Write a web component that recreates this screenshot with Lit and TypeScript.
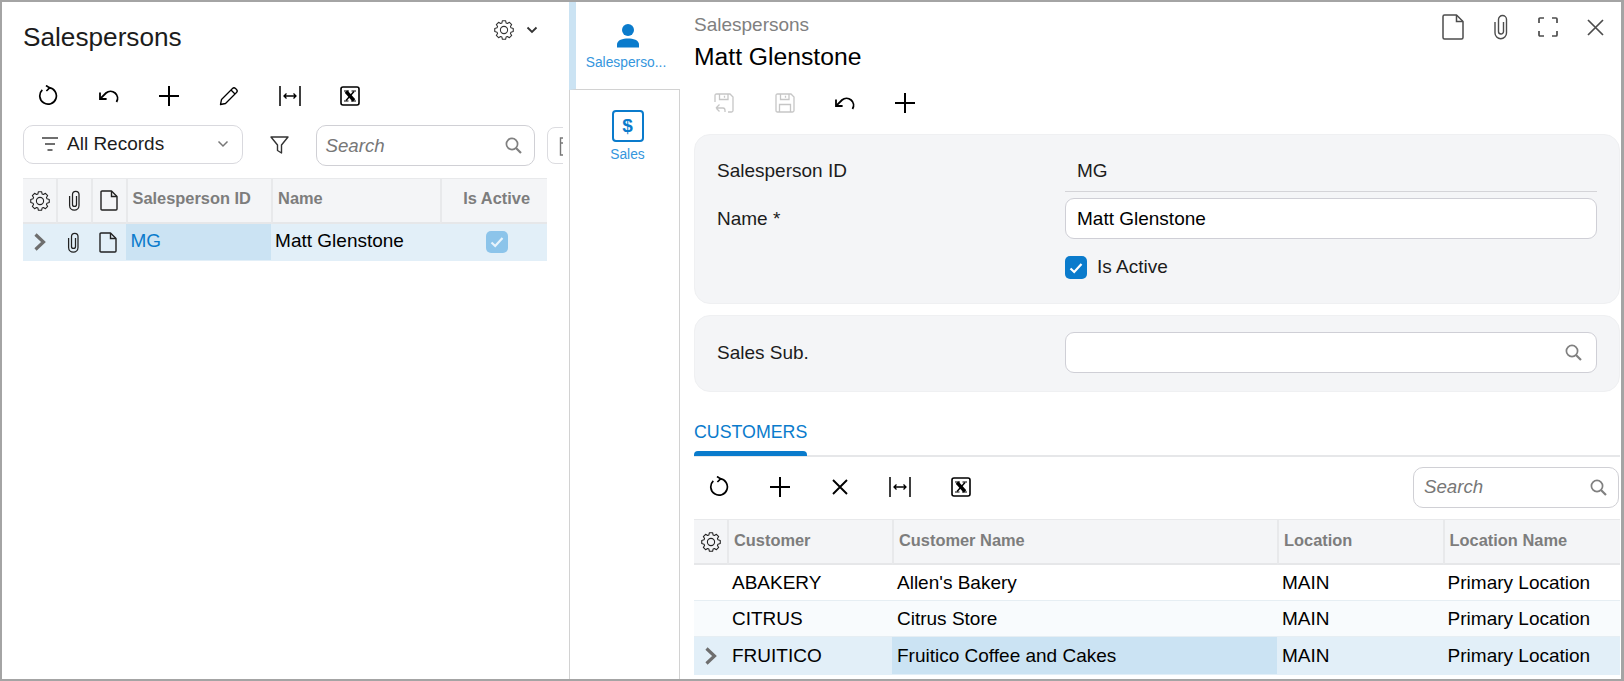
import { LitElement, html, css, svg } from "lit";
import { customElement } from "lit/decorators.js";

const gearPath = () => {
  // eight teeth round a centre of 10,10
  const pts: string[] = [];
  for (let i = 0; i < 8; i++) {
    const a = (i * Math.PI) / 4;
    for (const [r, d] of [[7.3, -0.3], [9.4, -0.17], [9.4, 0.17], [7.3, 0.3]]) {
      const x = 10 + r * Math.sin(a + d);
      const y = 10 - r * Math.cos(a + d);
      pts.push(`${x.toFixed(2)} ${y.toFixed(2)}`);
    }
  }
  return "M" + pts.join("L") + "Z";
};

const icons: Record<string, { w: number; h: number; body: unknown }> = {
  gear: { w: 20, h: 20, body: svg`<path d=${gearPath()} stroke-width="1.1" stroke-linejoin="round"/><circle cx="10" cy="10" r="3.6" stroke-width="1.1"/>` },
  chevDown: { w: 12, h: 8, body: svg`<path d="M1.5 1.5L6 6l4.5-4.5" stroke-width="1.8"/>` },
  chevSoft: { w: 12, h: 8, body: svg`<path d="M1.5 1.5L6 6l4.5-4.5" stroke-width="1.5"/>` },
  chevRight: { w: 13, h: 18, body: svg`<path d="M2.5 1.5L10.5 9l-8 7.5" stroke-width="3.2"/>` },
  refresh: { w: 20, h: 22, body: svg`<path d="M11 2.6A8.3 8.3 0 1 1 4.3 4.9" stroke-width="1.7"/><path d="M8 0.5L11.6 2.9 8.4 6" stroke-width="1.7"/>` },
  undo: { w: 22, h: 20, body: svg`<path d="M2.6 12.4L8 7A7 7 0 0 1 18.5 16" stroke-width="1.8"/><path d="M2 6.5V13H8.6" stroke-width="1.8"/>` },
  plus: { w: 20, h: 20, body: svg`<path d="M10 0V20M0 10H20" stroke-width="2"/>` },
  close: { w: 16, h: 16, body: svg`<path d="M1 1L15 15M15 1L1 15" stroke-width="1.9"/>` },
  pencil: { w: 20, h: 20, body: svg`<path d="M1.5 18.5L2.5 13.5 13.5 2.5Q15 1 16.5 2.5L17.5 3.5Q19 5 17.5 6.5L6.5 17.5Z" stroke-width="1.3" stroke-linejoin="round"/><path d="M12 4L16 8" stroke-width="1.3"/>` },
  fit: { w: 22, h: 20, body: svg`<path d="M1 0V20M21 0V20" stroke-width="1.5"/><path d="M5 10H17M7.5 7.5L5 10l2.5 2.5M14.5 7.5L17 10l-2.5 2.5" stroke-width="1.3"/>` },
  excel: { w: 20, h: 20, body: svg`<rect x="1" y="1" width="18" height="18" rx="2" stroke-width="1.6"/><path d="M6 5.5L14 14.5" stroke-width="3.4"/><path d="M14 5.5L6 14.5" stroke-width="1.4"/><path d="M4 5H9M11.5 5H16M4 15H8.5M11 15H16" stroke-width="1.2"/>` },
  lines: { w: 16, h: 14, body: svg`<path d="M0 1H16M3 7H13M5.5 13H10.5" stroke-width="2"/>` },
  funnel: { w: 19, h: 18, body: svg`<path d="M1 1H18L11.5 9V17L7.5 14.5V9Z" stroke-width="1.4" stroke-linejoin="round"/>` },
  search: { w: 17, h: 17, body: svg`<circle cx="7" cy="7" r="5.6" stroke-width="1.7"/><path d="M11 11L16 16" stroke-width="2.2"/>` },
  doc: { w: 18, h: 21, body: svg`<path d="M1 2Q1 1 2 1H11.5L17 6.5V19Q17 20 16 20H2Q1 20 1 19Z" stroke-width="1.4" stroke-linejoin="round"/><path d="M11.5 1V6.5H17" stroke-width="1.4"/>` },
  docLg: { w: 22, h: 26, body: svg`<path d="M1 2.5Q1 1 2.5 1H14.5L21 7.5V23.5Q21 25 19.5 25H2.5Q1 25 1 23.5Z" stroke-width="1.5" stroke-linejoin="round"/><path d="M14.5 1V7.5H21" stroke-width="1.5"/>` },
  clip: { w: 13, h: 21, body: svg`<path d="M8.5 6V14.4A2 2 0 0 1 4.5 14.4V4.5A3.2 3.2 0 0 1 11 4.5V15.5A4.7 4.7 0 0 1 1.6 15.5V6" stroke-width="1.25"/>` },
  clipLg: { w: 16, h: 26, body: svg`<path d="M10.5 8V17.5A2.5 2.5 0 0 1 5.5 17.5V5.5A4 4 0 0 1 13.5 5.5V19A5.75 5.75 0 0 1 2 19V8" stroke-width="1.4"/>` },
  expand: { w: 20, h: 20, body: svg`<path d="M1 6V2Q1 1 2 1H6M14 1H18Q19 1 19 2V6M19 14V18Q19 19 18 19H14M6 19H2Q1 19 1 18V14" stroke-width="1.7"/>` },
  closeLg: { w: 17, h: 17, body: svg`<path d="M1 1L16 16M16 1L1 16" stroke-width="1.7"/>` },
  check: { w: 14, h: 12, body: svg`<path d="M1.5 6.5L5.2 10 12.5 2" stroke-width="2.2"/>` },
  person: { w: 24, h: 24, body: svg`<circle cx="12" cy="6" r="6" fill="currentColor" stroke="none"/><path d="M1 23.5V20.5C1 16 7 14.5 12 14.5S23 16 23 20.5V23.5Z" fill="currentColor" stroke="none"/>` },
  save: { w: 20, h: 20, body: svg`<path d="M1 2.5Q1 1 2.5 1H16L19 4V17.5Q19 19 17.5 19H2.5Q1 19 1 17.5Z" stroke-width="1.3"/><path d="M5.5 1V6.5H14V1M10.5 2.8V4.8M4.5 19V11.5H15.5V19" stroke-width="1.3"/>` },
  saveBack: { w: 20, h: 20, body: svg`<path d="M1 9V2.5Q1 1 2.5 1H16L19 4V17.5Q19 19 17.5 19H14" stroke-width="1.3"/><path d="M5.5 1V6.5H14V1M10.5 2.8V4.8" stroke-width="1.3"/><path d="M2 15L5.5 11.5M2 15L5.5 18.5M2 15H9Q11 15 11 17.5V19" stroke-width="1.3"/>` },
  bracket: { w: 8, h: 19, body: svg`<path d="M6 1H1.5V18H6M1.5 6H5" stroke-width="1.4"/>` },
};

const icon = (name: string, cls = "") => {
  const i = icons[name];
  return html`<svg class="ic ${cls}" width=${i.w} height=${i.h} viewBox="0 0 ${i.w} ${i.h}" fill="none" stroke="currentColor">${i.body}</svg>`;
};

const customers = [
  { id: "ABAKERY", name: "Allen's Bakery", cls: "" },
  { id: "CITRUS", name: "Citrus Store", cls: "tint" },
  { id: "FRUITICO", name: "Fruitico Coffee and Cakes", cls: "current" },
];

@customElement("app-root")
export class AppRoot extends LitElement {
  static styles = css`
    :host {
      display: block;
      width: 1624px;
      height: 681px;
      font-family: "Liberation Sans", Arial, sans-serif;
      color: #000;
    }
    * {
      box-sizing: border-box;
    }
    .page {
      display: flex;
      width: 1624px;
      height: 681px;
      border: solid #a4a4a4;
      border-width: 2px 3px 2px 2px;
      background: #fff;
      overflow: hidden;
    }
    .ic {
      display: block;
      flex: none;
    }

    /* left list */
    .list {
      width: 567px;
      flex: none;
      padding-left: 21px;
    }
    .list-head {
      display: flex;
      justify-content: space-between;
      height: 74px;
      padding-right: 31px;
    }
    .list-title {
      font-size: 26.2px;
      line-height: 30px;
      margin-top: 20px;
      color: #1c1c1c;
    }
    .list-tools {
      display: flex;
      align-items: center;
      gap: 12px;
      height: 20px;
      margin-top: 18px;
      color: #333;
    }
    .toolbar {
      display: flex;
      align-items: center;
      height: 40px;
      margin-left: -5px;
    }
    .tb {
      width: 60.4px;
      height: 40px;
      display: flex;
      align-items: center;
      justify-content: center;
      flex: none;
    }
    .filters {
      display: flex;
      align-items: flex-start;
      margin-top: 9px;
      width: 540px;
      overflow: hidden;
    }
    .combo {
      width: 219.5px;
      height: 39px;
      flex: none;
      display: flex;
      align-items: center;
      padding: 0 13px 2px 18px;
      border: 1px solid #d9d9de;
      border-radius: 10px;
      font-size: 19px;
      color: #1c1c1c;
    }
    .combo .lines {
      color: #6f6f6f;
      margin-right: 9px;
    }
    .combo .chev {
      margin-left: auto;
      color: #777;
    }
    .funnel {
      width: 73px;
      height: 39px;
      flex: none;
      display: flex;
      align-items: center;
      justify-content: center;
      color: #333;
    }
    .search {
      display: flex;
      align-items: center;
      justify-content: space-between;
      height: 41px;
      border: 1px solid #d0d0d5;
      border-radius: 10px;
      padding: 0 12px 0 9px;
      font-size: 18.7px;
      font-style: italic;
      color: #777;
    }
    .search .ic {
      color: #808080;
    }
    .filters .search {
      width: 219.5px;
      flex: none;
    }
    .stub {
      width: 40px;
      height: 37px;
      flex: none;
      margin: 2px 0 0 11.5px;
      border: 1px solid #dcdce0;
      border-radius: 8px;
      padding: 9px 0 0 11px;
      color: #777;
    }

    /* tables */
    .table {
      display: grid;
      font-size: 19px;
    }
    .list-table {
      width: 524px;
      margin-top: 12px;
      grid-template-columns: 33px 34.5px 35px 145.6px 169px 1fr;
      grid-template-rows: 46px 37px;
    }
    .cust-table {
      margin-top: 2px;
      grid-template-columns: 33px 165px 385px 165.6px 1fr;
      grid-template-rows: 46px 36px 36px 38px;
    }
    .hd {
      display: flex;
      align-items: center;
      min-width: 0;
      padding: 0 0 3px 5px;
      background: #f4f5f7;
      border-top: 1px solid #e8e9eb;
      border-bottom: 2px solid #e6e7e9;
      border-left: 2px solid #e8e9eb;
      font-size: 16.4px;
      font-weight: bold;
      color: #7d7d7d;
      white-space: nowrap;
    }
    .list-table .hd {
      padding-bottom: 5px;
    }
    .hd:first-child {
      border-left: 0;
    }
    .list-table .hd.mark,
    .hd.mark {
      justify-content: center;
      padding: 0;
      color: #222;
    }
    .list-table .hd.end,
    .hd.end {
      justify-content: flex-end;
      padding: 0 17px 5px 0;
    }
    .cell {
      display: flex;
      align-items: center;
      min-width: 0;
      padding-left: 5px;
      white-space: nowrap;
      border-bottom: 1px solid #e6eef3;
    }
    .list-table .cell {
      padding-bottom: 2px;
    }
    .list-table .cell.name-cell {
      padding-left: 4px;
    }
    .list-table .cell.mark,
    .cell.mark {
      justify-content: center;
      padding: 0;
      color: #222;
    }
    .cell.mark.chevron {
      color: #6e6e6e;
    }
    .list-table .cell.center {
      justify-content: center;
      padding: 0 0 0 6px;
    }
    .tint {
      background: #f8fbfd;
    }
    .current {
      background: #e2eff8;
      border-bottom-color: #e2eff8;
    }
    .picked {
      background: #cbe3f3;
      border-bottom: 1px solid #e2eff8;
    }
    .link {
      color: #0a7bcc;
    }
    .soft-check {
      width: 22px;
      height: 22px;
      border-radius: 5px;
      background: #8cc4ea;
      color: #e8f4fc;
      display: flex;
      align-items: center;
      justify-content: center;
    }

    /* side nav */
    .nav {
      width: 111px;
      flex: none;
      display: flex;
      flex-direction: column;
      color: #3596dd;
      font-size: 13.8px;
    }
    .nav-on {
      height: 88px;
      border-left: 7px solid #cbe3f3;
      border-bottom: 1px solid #d2d2d2;
      display: flex;
      flex-direction: column;
      align-items: center;
      padding-top: 22px;
      gap: 7px;
    }
    .nav-on span {
      margin-right: 4px;
    }
    .nav-on .ic {
      color: #0a7bcc;
    }
    .nav-off {
      flex: 1;
      border-left: 1px solid #d2d2d2;
      border-right: 1px solid #d2d2d2;
      display: flex;
      flex-direction: column;
      align-items: center;
      padding: 20px 0 0 6px;
      gap: 5px;
    }
    .sales-box {
      width: 32px;
      height: 32px;
      border: 2.5px solid #0a7bcc;
      border-radius: 4px;
      color: #0a7bcc;
      font-size: 19px;
      font-weight: bold;
      display: flex;
      align-items: center;
      justify-content: center;
    }

    /* right form */
    .detail {
      flex: 1;
      min-width: 0;
      padding: 0 1px 0 14px;
    }
    .detail-head {
      display: flex;
      justify-content: space-between;
      height: 81px;
    }
    .crumb {
      font-size: 19px;
      line-height: 22px;
      margin-top: 12px;
      color: #808080;
    }
    .name {
      font-size: 24.7px;
      line-height: 30px;
      margin-top: 6px;
    }
    .head-tools {
      display: flex;
      align-items: center;
      gap: 29px;
      height: 26px;
      margin-top: 12px;
      padding-right: 16px;
      color: #4c4c4c;
    }
    .detail .toolbar {
      margin-left: 0;
      padding-left: 0;
    }
    .off {
      color: #c6c6c6;
    }
    .section {
      display: grid;
      grid-template-columns: 348px 1fr;
      align-items: center;
      padding: 18px 22px 24px 22px;
      margin-top: 11px;
      background: #f4f5f7;
      border: 1px solid #eff0f2;
      border-radius: 16px;
      font-size: 19px;
      color: #1c1c1c;
    }
    .section.short {
      padding: 16px 22px 18px 22px;
    }
    .id-label {
      padding-bottom: 3px;
    }
    .readonly {
      height: 39px;
      display: flex;
      align-items: center;
      padding: 0 0 2px 12px;
      border-bottom: 1px solid #d4d4d8;
    }
    .input {
      height: 41px;
      margin-top: 6px;
      display: flex;
      align-items: center;
      justify-content: space-between;
      padding: 0 14px 0 11px;
      background: #fff;
      border: 1px solid #cfcfd6;
      border-radius: 9px;
      color: #000;
    }
    .section.short .input {
      margin-top: 0;
    }
    .input .ic {
      color: #808080;
    }
    .field-label {
      margin-top: 6px;
    }
    .section.short .field-label {
      margin-top: 0;
    }
    .checkline {
      grid-column: 2;
      display: flex;
      align-items: center;
      gap: 10px;
      height: 23px;
      margin-top: 17px;
    }
    .checkline span {
      margin-bottom: 2px;
    }
    .box {
      width: 22px;
      height: 23px;
      border-radius: 5px;
      background: #0a7bcc;
      color: #fff;
      display: flex;
      align-items: center;
      justify-content: center;
    }
    .tabs {
      display: flex;
      align-items: flex-end;
      height: 65px;
      border-bottom: 2px solid #e6e7e9;
    }
    .tab {
      display: flex;
      flex-direction: column;
      font-size: 17.8px;
      color: #0a7bcc;
    }
    .tab-label {
      line-height: 22px;
      margin-bottom: 8px;
    }
    .tab-bar {
      height: 5px;
      margin-bottom: -1px;
      background: #0a7bcc;
      border-radius: 4px 4px 0 0;
    }
    .detail .grid-bar {
      height: 60px;
      margin-left: -5px;
      justify-content: flex-start;
    }
    .grid-bar .search {
      width: 206px;
      margin-left: auto;
      margin-right: 1px;
      padding: 0 11px 0 10px;
    }
  `;

  render() {
    return html`
      <div class="page">
        <section class="list">
          <div class="list-head">
            <div class="list-title">Salespersons</div>
            <div class="list-tools">${icon("gear")}${icon("chevDown")}</div>
          </div>
          <div class="toolbar">
            ${["refresh", "undo", "plus", "pencil", "fit", "excel"].map((n) => html`<div class="tb">${icon(n)}</div>`)}
          </div>
          <div class="filters">
            <div class="combo">
              ${icon("lines", "lines")}<span>All Records</span>${icon("chevSoft", "chev")}
            </div>
            <div class="funnel">${icon("funnel")}</div>
            <div class="search"><span>Search</span>${icon("search")}</div>
            <div class="stub">${icon("bracket")}</div>
          </div>
          <div class="table list-table">
            <div class="hd mark">${icon("gear")}</div>
            <div class="hd mark">${icon("clip")}</div>
            <div class="hd mark">${icon("doc")}</div>
            <div class="hd">Salesperson ID</div>
            <div class="hd">Name</div>
            <div class="hd end">Is Active</div>
            <div class="cell mark current chevron">${icon("chevRight")}</div>
            <div class="cell mark current">${icon("clip")}</div>
            <div class="cell mark current">${icon("doc")}</div>
            <div class="cell picked link">MG</div>
            <div class="cell current name-cell">Matt Glenstone</div>
            <div class="cell center current"><div class="soft-check">${icon("check")}</div></div>
          </div>
        </section>

        <nav class="nav">
          <div class="nav-on">${icon("person")}<span>Salesperso...</span></div>
          <div class="nav-off"><div class="sales-box">$</div><span>Sales</span></div>
        </nav>

        <main class="detail">
          <div class="detail-head">
            <div>
              <div class="crumb">Salespersons</div>
              <div class="name">Matt Glenstone</div>
            </div>
            <div class="head-tools">${icon("docLg")}${icon("clipLg")}${icon("expand")}${icon("closeLg")}</div>
          </div>
          <div class="toolbar">
            <div class="tb off">${icon("saveBack")}</div>
            <div class="tb off">${icon("save")}</div>
            <div class="tb">${icon("undo")}</div>
            <div class="tb">${icon("plus")}</div>
          </div>

          <div class="section">
            <div class="id-label">Salesperson ID</div>
            <div class="readonly">MG</div>
            <div class="field-label">Name *</div>
            <div class="input">Matt Glenstone</div>
            <div class="checkline"><div class="box">${icon("check")}</div><span>Is Active</span></div>
          </div>
          <div class="section short">
            <div class="field-label">Sales Sub.</div>
            <div class="input"><span></span>${icon("search")}</div>
          </div>

          <div class="tabs">
            <div class="tab"><div class="tab-label">CUSTOMERS</div><div class="tab-bar"></div></div>
          </div>
          <div class="toolbar grid-bar">
            ${["refresh", "plus", "close", "fit", "excel"].map((n) => html`<div class="tb">${icon(n)}</div>`)}
            <div class="search"><span>Search</span>${icon("search")}</div>
          </div>
          <div class="table cust-table">
            <div class="hd mark">${icon("gear")}</div>
            <div class="hd">Customer</div>
            <div class="hd">Customer Name</div>
            <div class="hd">Location</div>
            <div class="hd">Location Name</div>
            ${customers.map((c) => {
              const on = c.cls === "current";
              return html`
                <div class="cell mark chevron ${c.cls}">${on ? icon("chevRight") : ""}</div>
                <div class="cell ${c.cls}">${c.id}</div>
                <div class="cell ${on ? "picked" : c.cls}">${c.name}</div>
                <div class="cell ${c.cls}">MAIN</div>
                <div class="cell ${c.cls}">Primary Location</div>
              `;
            })}
          </div>
        </main>
      </div>
    `;
  }
}

declare global {
  interface HTMLElementTagNameMap {
    "app-root": AppRoot;
  }
}
